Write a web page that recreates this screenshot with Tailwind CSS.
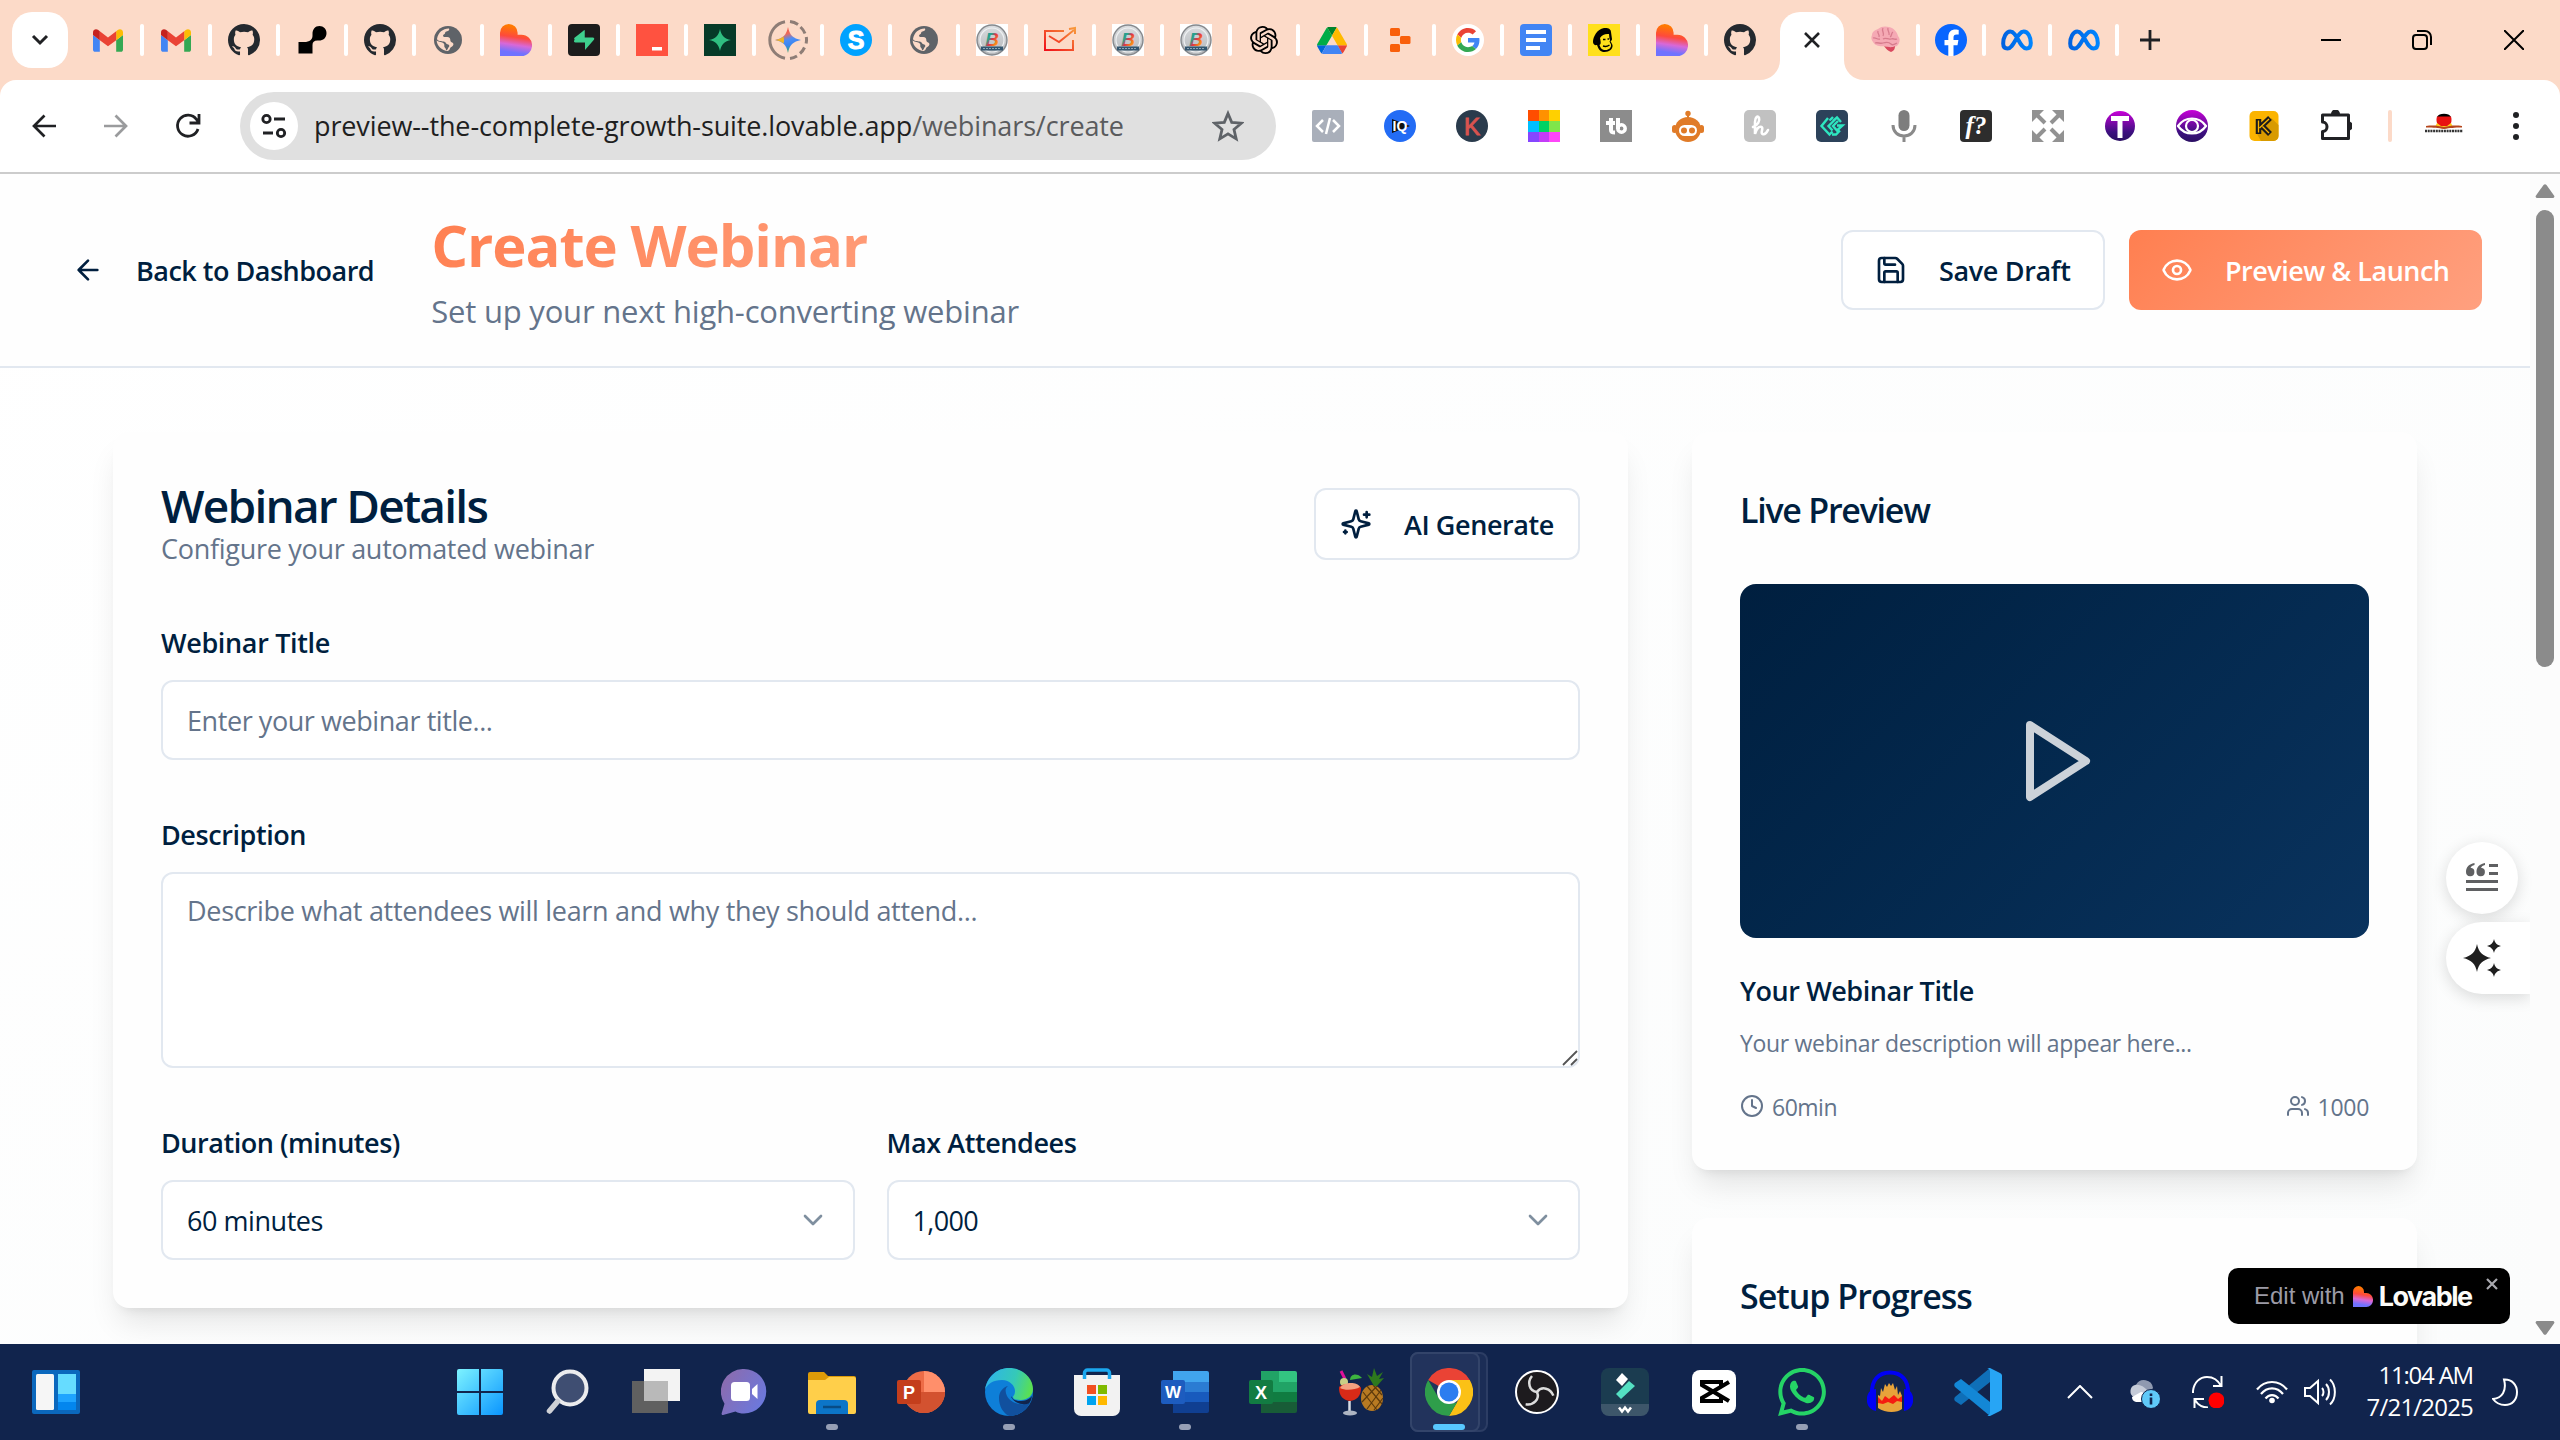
<!DOCTYPE html>
<html lang="en">
<head>
<meta charset="utf-8">
<title>Create Webinar</title>
<script src="https://cdn.jsdelivr.net/npm/@tailwindcss/browser@4"></script>
</head>
<body class="w-[2560px] h-[1440px] overflow-hidden bg-[#fcdac8] font-['Open_Sans',sans-serif] text-[#001f3f]">

<!-- shared symbols -->
<svg width="0" height="0" class="absolute">
  <defs>
    <linearGradient id="lov" x1=".6" y1="0" x2=".45" y2="1"><stop offset=".1" stop-color="#ff7a00"/><stop offset=".42" stop-color="#fe4a3c"/><stop offset=".66" stop-color="#d868d8"/><stop offset=".9" stop-color="#6f72ff"/></linearGradient>
    <linearGradient id="meta" x1="0" y1="0" x2="1" y2="0"><stop offset="0" stop-color="#0062e0"/><stop offset="1" stop-color="#0085ff"/></linearGradient>
    <linearGradient id="rb" x1="0" y1="0" x2="1" y2="1"><stop offset=".1" stop-color="#1b8f9b"/><stop offset=".35" stop-color="#2aa58a"/><stop offset=".5" stop-color="#e0304a"/><stop offset=".7" stop-color="#f6821c"/><stop offset="1" stop-color="#f8c020"/></linearGradient>
    <linearGradient id="metal" x1="0" y1="0" x2="0" y2="1"><stop offset="0" stop-color="#d9dcdf"/><stop offset="1" stop-color="#b4b7ba"/></linearGradient>
  </defs>
  <symbol id="gmail" viewBox="52 42 88 66"><path fill="#4285f4" d="M58 108h14V74L52 59v43c0 3.32 2.69 6 6 6"/><path fill="#34a853" d="M120 108h14c3.32 0 6-2.69 6-6V59l-20 15"/><path fill="#fbbc04" d="M120 48v26l20-15v-8c0-7.42-8.47-11.65-14.4-7.2"/><path fill="#ea4335" d="M72 74V48l24 18 24-18v26L96 92"/><path fill="#c5221f" d="M52 51v8l20 15V48l-5.6-4.2c-5.94-4.45-14.4-.22-14.4 7.2"/></symbol>
  <symbol id="github" viewBox="0 0 16 16"><path fill="#24292f" d="M8 0C3.58 0 0 3.58 0 8c0 3.54 2.29 6.53 5.47 7.59.4.07.55-.17.55-.38 0-.19-.01-.82-.01-1.49-2.01.37-2.53-.49-2.69-.94-.09-.23-.48-.94-.82-1.13-.28-.15-.68-.52-.01-.53.63-.01 1.08.58 1.23.82.72 1.21 1.87.87 2.33.66.07-.52.28-.87.51-1.07-1.78-.2-3.64-.89-3.64-3.95 0-.87.31-1.59.82-2.15-.08-.2-.36-1.02.08-2.12 0 0 .67-.21 2.2.82.64-.18 1.32-.27 2-.27.68 0 1.36.09 2 .27 1.53-1.04 2.2-.82 2.2-.82.44 1.1.16 1.92.08 2.12.51.56.82 1.27.82 2.15 0 3.07-1.87 3.75-3.65 3.95.29.25.54.73.54 1.48 0 1.07-.01 1.93-.01 2.2 0 .21.15.46.55.38A8.013 8.013 0 0016 8c0-4.42-3.58-8-8-8z"/></symbol>
  <symbol id="globe" viewBox="0 0 32 32"><circle cx="16" cy="16" r="14" fill="#5f6368"/><path fill="#fcdac8" d="M17 4.6c1 2-1.5 2.6-3.2 3.2-1 .4-.4 2.4-2 2.8-1.2.4-.8 2.2.2 2.4 2 .3 4-.4 5.4.8 1.600 1.400.2 3.600 2.200 4.400 1.600.6 2.400 1.800 1.400 3.200-1.200 1.600-2.400 1.200-3 3.200-.3 1.200-1 1.800-2.200 2.400-5.600 0-10.800-4.800-11.200-10.400 2.400 1.600 5.600 1.200 7.200 3 1.200 1.400-.2 3 1.200 4.200 1.200.8.6 2.400 1.600 2.400 1.600-.6 1.200-2.600 2.600-3.600.6-1.600-.6-2-1.800-2.400-1.600-.4-1.600-2.800-3.600-2.800-2.200 0-6.200-.2-6.800-2.400C6 8.600 11.200 4.400 17 4.600z"/></symbol>
  <symbol id="lovable" viewBox="0 0 32 32"><path fill="url(#lov)" d="M0 32V8.800a8.800 8.800 0 0 1 17.600 0v1.900h3.800a10.650 10.650 0 0 1 0 21.300z"/></symbol>
  <symbol id="bbadge" viewBox="0 0 32 32"><path fill="#fff" d="M0 0h32v32H0z"/><circle cx="16" cy="16" r="15" fill="url(#metal)" stroke="#85888c" stroke-width="1.400"/><circle cx="16" cy="16" r="12" fill="none" stroke="#eef0f2" stroke-width="1.200"/><path fill="#33566f" d="M5 22.500h22v4H5z"/><path stroke="#8fa5b5" d="M7 24.500h18" stroke-dasharray="2 1"/></symbol>
  <symbol id="metalogo" viewBox="0 0 32 22"><path fill="none" stroke="url(#meta)" stroke-width="4" d="M2.200 14.500C2.200 8.500 5 2.500 9.200 2.500c7 0 9.300 17 16.300 17 3 0 4.300-2.300 4.300-5.500 0-6-2.900-11.500-7-11.500C16 2.500 13 19.500 6.500 19.500c-2.900 0-4.300-2-4.300-5z"/></symbol>
</svg>

<div class="flex h-full flex-col">

<!-- tab strip -->
<div class="flex h-20 items-center pl-3">
  <div class="flex h-14 w-14 items-center justify-center rounded-[20px] bg-white">
    <svg width="20" height="20" viewBox="0 0 20 20" fill="none" stroke="#202124" stroke-width="3"><path d="M3 6l7 7 7-7"/></svg>
  </div>
  <div class="ml-2 flex items-center">
    <div class="flex w-16 justify-center"><svg width="30" height="23"><use href="#gmail"/></svg></div><i class="h-8 w-1 rounded-full bg-white"></i>
    <div class="flex w-16 justify-center"><svg width="30" height="23"><use href="#gmail"/></svg></div><i class="h-8 w-1 rounded-full bg-white"></i>
    <div class="flex w-16 justify-center"><svg width="32" height="32"><use href="#github"/></svg></div><i class="h-8 w-1 rounded-full bg-white"></i>
    <div class="flex w-16 justify-center"><svg width="32" height="32" viewBox="0 0 32 32"><path d="M2.500 29.500V18h5.500c6 0 8.500-2.500 8.500-6.500V10C16.500 5.500 19 2 23.500 2 27.500 2 30.500 5 30.500 9c0 5-3.400 7.500-7.500 7.500h-1.500c-3.500 0-5 1.500-5 4.500v8.500z"/></svg></div><i class="h-8 w-1 rounded-full bg-white"></i>
    <div class="flex w-16 justify-center"><svg width="32" height="32"><use href="#github"/></svg></div><i class="h-8 w-1 rounded-full bg-white"></i>
    <div class="flex w-16 justify-center"><svg width="32" height="32"><use href="#globe"/></svg></div><i class="h-8 w-1 rounded-full bg-white"></i>
    <div class="flex w-16 justify-center"><svg width="32" height="32"><use href="#lovable"/></svg></div><i class="h-8 w-1 rounded-full bg-white"></i>
    <div class="flex w-16 justify-center"><svg width="32" height="32" viewBox="0 0 32 32"><rect width="32" height="32" rx="4" fill="#1c1c1c"/><path fill="#3ecf8e" d="M16.500 6v10H7.500c-1.200 0-1.800-1.200-1-2.200z"/><path fill="#3ecf8e" d="M16.500 6v7.500h8.300c1.300 0 1.900 1.300 1.100 2.300L17 26V18.500H7.400c-1.200 0-1.900-1.300-1.100-2.300z"/></svg></div><i class="h-8 w-1 rounded-full bg-white"></i>
    <div class="flex w-16 justify-center"><svg width="32" height="32"><path fill="#ff5240" d="M0 0h32v32H0z"/><path fill="#fff" d="M16 23h10v3.500H16z"/></svg></div><i class="h-8 w-1 rounded-full bg-white"></i>
    <div class="flex w-16 justify-center"><svg width="32" height="32"><path fill="#063b28" d="M0 0h32v32H0z"/><path fill="#2fbf80" d="M16 5c1.200 6.500 4.500 9.800 11 11-6.500 1.200-9.800 4.500-11 11-1.200-6.500-4.500-9.800-11-11 6.500-1.200 9.800-4.500 11-11z"/></svg></div><i class="h-8 w-1 rounded-full bg-white"></i>
    <div class="flex w-16 justify-center"><svg width="40" height="40" viewBox="0 0 40 40"><defs><linearGradient id="gem" x1=".3" y1="0" x2=".6" y2="1"><stop offset="0" stop-color="#f24a3d"/><stop offset=".28" stop-color="#ee6a5a"/><stop offset=".5" stop-color="#4c8df6"/><stop offset=".7" stop-color="#3a86f0"/><stop offset="1" stop-color="#34a853"/></linearGradient></defs><path fill="none" stroke="#8e7d76" stroke-width="3" d="M17 1.800A18.500 18.500 0 0 0 17 38.200M22 1.500a18 18 0 0 1 8 3M32.500 7a18 18 0 0 1 4.500 6.500M38.300 17a18 18 0 0 1-.2 6.500M36.500 27.500a18 18 0 0 1-4.500 6M29 36a18 18 0 0 1-7 2.500"/><path fill="url(#gem)" d="M20 7c1.400 7.800 5.200 11.600 13 13-7.800 1.400-11.600 5.200-13 13-1.400-7.800-5.200-11.600-13-13 7.800-1.400 11.600-5.200 13-13z"/><path fill="#f0b429" d="M7 20c3.500-.6 6.200-1.800 8.300-3.600.8 1.500 1.200 4.500.2 7.100C13.400 21.800 10.500 20.600 7 20z"/></svg></div><i class="h-8 w-1 rounded-full bg-white"></i>
    <div class="flex w-16 justify-center"><svg width="32" height="32" viewBox="0 0 32 32"><circle cx="16" cy="16" r="16" fill="#00a2ff"/><text x="16" y="25" text-anchor="middle" font-family="Liberation Sans" font-weight="700" font-size="25" fill="#fff" stroke="#fff">S</text></svg></div><i class="h-8 w-1 rounded-full bg-white"></i>
    <div class="flex w-16 justify-center"><svg width="32" height="32"><use href="#globe"/></svg></div><i class="h-8 w-1 rounded-full bg-white"></i>
    <div class="flex w-16 justify-center"><svg width="32" height="32"><use href="#bbadge"/><text x="16" y="22" text-anchor="middle" font-family="Liberation Sans" font-weight="700" font-style="italic" font-size="19" fill="url(#rb)">B</text></svg></div><i class="h-8 w-1 rounded-full bg-white"></i>
    <div class="flex w-16 justify-center"><svg width="32" height="32" viewBox="0 0 32 32"><defs><linearGradient id="zm" x1="0" y1="1" x2="1" y2="0"><stop offset="0" stop-color="#f0101a"/><stop offset="1" stop-color="#f89a3c"/></linearGradient></defs><path fill="none" stroke="url(#zm)" stroke-width="2" d="M20 7H1v19h28V16M5 12l10 6L30 6M25 5l6-1v6"/></svg></div><i class="h-8 w-1 rounded-full bg-white"></i>
    <div class="flex w-16 justify-center"><svg width="32" height="32"><use href="#bbadge"/><text x="16" y="22" text-anchor="middle" font-family="Liberation Sans" font-weight="700" font-style="italic" font-size="19" fill="url(#rb)">B</text></svg></div><i class="h-8 w-1 rounded-full bg-white"></i>
    <div class="flex w-16 justify-center"><svg width="32" height="32"><use href="#bbadge"/><text x="16" y="22" text-anchor="middle" font-family="Liberation Sans" font-weight="700" font-style="italic" font-size="19" fill="url(#rb)">B</text></svg></div><i class="h-8 w-1 rounded-full bg-white"></i>
    <div class="flex w-16 justify-center"><svg width="28" height="28" viewBox="0 0 24 24"><path d="M22.2819 9.8211a5.9847 5.9847 0 0 0-.5157-4.9108 6.0462 6.0462 0 0 0-6.5098-2.9A6.0651 6.0651 0 0 0 4.9807 4.1818a5.9847 5.9847 0 0 0-3.9977 2.9 6.0462 6.0462 0 0 0 .7427 7.0966 5.98 5.98 0 0 0 .511 4.9107 6.051 6.051 0 0 0 6.5146 2.9001A5.9847 5.9847 0 0 0 13.2599 24a6.0557 6.0557 0 0 0 5.7718-4.2058 5.9894 5.9894 0 0 0 3.9977-2.9001 6.0557 6.0557 0 0 0-.7475-7.0729zm-9.022 12.6081a4.4755 4.4755 0 0 1-2.8764-1.0408l.1419-.0804 4.7783-2.7582a.7948.7948 0 0 0 .3927-.6813v-6.7369l2.02 1.1686a.071.071 0 0 1 .038.052v5.5826a4.504 4.504 0 0 1-4.4945 4.4944zm-9.6607-4.1254a4.4708 4.4708 0 0 1-.5346-3.0137l.142.0852 4.783 2.7582a.7712.7712 0 0 0 .7806 0l5.8428-3.3685v2.3324a.0804.0804 0 0 1-.0332.0615L9.74 19.9502a4.4992 4.4992 0 0 1-6.1408-1.6464zM2.3408 7.8956a4.485 4.485 0 0 1 2.3655-1.9728V11.6a.7664.7664 0 0 0 .3879.6765l5.8144 3.3543-2.0201 1.1685a.0757.0757 0 0 1-.071 0l-4.8303-2.7865A4.504 4.504 0 0 1 2.3408 7.872zm16.5963 3.8558L13.1038 8.364 15.1192 7.2a.0757.0757 0 0 1 .071 0l4.8303 2.7913a4.4944 4.4944 0 0 1-.6765 8.1042v-5.6772a.79.79 0 0 0-.407-.667zm2.0107-3.0231l-.142-.0852-4.7735-2.7818a.7759.7759 0 0 0-.7854 0L9.409 9.2297V6.8974a.0662.0662 0 0 1 .0284-.0615l4.8303-2.7866a4.4992 4.4992 0 0 1 6.6802 4.66zM8.3065 12.863l-2.02-1.1638a.0804.0804 0 0 1-.038-.0567V6.0742a4.4992 4.4992 0 0 1 7.3757-3.4537l-.142.0805L8.704 5.459a.7948.7948 0 0 0-.3927.6813zm1.0976-2.3654l2.602-1.4998 2.6069 1.4998v2.9994l-2.5974 1.4997-2.6067-1.4997Z"/></svg></div><i class="h-8 w-1 rounded-full bg-white"></i>
    <div class="flex w-16 justify-center"><svg width="30" height="27" viewBox="0 0 87.300 78"><path fill="#0066da" d="m6.600 66.850 3.850 6.650c.8 1.400 1.950 2.500 3.300 3.300l13.750-23.800h-27.500c0 1.550.4 3.100 1.200 4.500z"/><path fill="#00ac47" d="m43.650 25-13.750-23.800c-1.350.8-2.500 1.900-3.300 3.300l-25.400 44a9.060 9.060 0 0 0 -1.200 4.500h27.500z"/><path fill="#ea4335" d="m73.550 76.800c1.350-.8 2.500-1.900 3.300-3.300l1.600-2.750 7.650-13.250c.8-1.400 1.200-2.950 1.200-4.500h-27.502l5.852 11.500z"/><path fill="#00832d" d="m43.650 25 13.750-23.800c-1.350-.8-2.900-1.200-4.500-1.200h-18.500c-1.600 0-3.150.45-4.500 1.200z"/><path fill="#4285f4" d="m59.800 53h-32.300l-13.750 23.800c1.350.8 2.900 1.200 4.500 1.200h50.800c1.600 0 3.150-.45 4.500-1.200z"/><path fill="#ffba00" d="m73.400 26.500-12.700-22c-.8-1.400-1.950-2.500-3.300-3.300l-13.750 23.800 16.150 28h27.450c0-1.550-.4-3.100-1.200-4.500z"/></svg></div><i class="h-8 w-1 rounded-full bg-white"></i>
    <div class="flex w-16 justify-center"><svg width="32" height="32" viewBox="0 0 32 32" fill="#f95f0b"><rect x="6" y="4" width="10" height="8" rx="1.500"/><rect x="16" y="12" width="10.500" height="8" rx="1.500"/><rect x="6" y="20" width="10" height="8" rx="1.500"/></svg></div><i class="h-8 w-1 rounded-full bg-white"></i>
    <div class="flex w-16 justify-center"><div class="flex h-8 w-8 items-center justify-center rounded-full bg-white"><svg width="24" height="24" viewBox="0 0 48 48"><path fill="#EA4335" d="M24 9.500c3.540 0 6.710 1.220 9.210 3.600l6.850-6.850C35.900 2.380 30.470 0 24 0 14.620 0 6.510 5.380 2.560 13.220l7.980 6.190C12.430 13.720 17.740 9.500 24 9.500z"/><path fill="#4285F4" d="M46.980 24.550c0-1.570-.15-3.090-.38-4.550H24v9.020h12.940c-.58 2.960-2.260 5.480-4.780 7.180l7.730 6c4.510-4.180 7.090-10.360 7.090-17.650z"/><path fill="#FBBC05" d="M10.530 28.590c-.48-1.450-.76-2.990-.76-4.590s.27-3.140.76-4.590l-7.980-6.190C.92 16.460 0 20.120 0 24c0 3.880.92 7.540 2.560 10.780l7.970-6.190z"/><path fill="#34A853" d="M24 48c6.480 0 11.930-2.130 15.890-5.810l-7.730-6c-2.150 1.450-4.920 2.300-8.160 2.300-6.260 0-11.570-4.220-13.470-9.910l-7.980 6.190C6.510 42.620 14.620 48 24 48z"/></svg></div></div><i class="h-8 w-1 rounded-full bg-white"></i>
    <div class="flex w-16 justify-center"><svg width="32" height="32"><rect width="32" height="32" rx="4" fill="#4285f4"/><path fill="#fff" d="M6 6h20v4H6zM6 14h20v4H6zM6 22h14v4H6z"/></svg></div><i class="h-8 w-1 rounded-full bg-white"></i>
    <div class="flex w-16 justify-center"><svg width="32" height="32" viewBox="0 0 32 32"><path fill="#ffe01b" d="M0 0h32v32H0z"/><path d="M5 18c0-5 4-13 11-14 4-.5 7 1 7 4l1 7c0 1.500-1 2-1.500 2l2 4c.5 4-3 7-8 7-4 0-6-2.500-7.500-7C7 21.500 5 20.500 5 18z"/><path fill="#ffe01b" d="M12 14c2-3 5-4.500 9-4l.5 5c1 1 .5 2 0 2.500l1.500 3c.5 3-2 5.500-5.500 5.500-3.500 0-5-2-6-5 2-1 1-4 .5-7z"/><path fill="none" stroke="#000" stroke-width="1.500" d="M15 15.500h2.500M19.500 15h1.500M15 22c3 1 5 0 6.500-1M8 14c3-5 8-7 13-6"/></svg></div><i class="h-8 w-1 rounded-full bg-white"></i>
    <div class="flex w-16 justify-center"><svg width="32" height="32"><use href="#lovable"/></svg></div><i class="h-8 w-1 rounded-full bg-white"></i>
    <div class="flex w-16 justify-center"><svg width="32" height="32"><use href="#github"/></svg></div>
  </div>
  <!-- active tab -->
  <div class="relative ml-2 flex h-[68px] w-16 items-center justify-center self-end rounded-t-[20px] bg-white pb-3">
    <svg class="absolute bottom-0 -left-5" width="20" height="20"><path fill="#fff" d="M20 0v20H0A20 20 0 0 0 20 0z"/></svg>
    <svg class="absolute bottom-0 -right-5" width="20" height="20"><path fill="#fff" d="M0 0v20h20A20 20 0 0 1 0 0z"/></svg>
    <svg width="18" height="18" viewBox="0 0 18 18" stroke="#202124" stroke-width="2.600"><path d="M2 2l14 14M16 2L2 16"/></svg>
  </div>
  <div class="ml-2.5 flex items-center">
    <div class="flex w-[62px] justify-center"><svg width="32" height="32" viewBox="0 0 32 32"><path fill="#f5a9b4" d="M9 5c3-3 8-3 11-2 5 1 8 5 9 9 2 2 2 5 1 7-1 3-4 4-6 4-3 1-6 0-8-1-4 1-10 0-12-4-2-2-2-5-1-7C3 8 6 6 9 5z"/><path fill="#d9485f" d="M15 22c4 1 8 2 11 0 0 3-1 5-4 6-3-1-5-3-7-6z"/><path fill="none" stroke="#d77c8d" stroke-width="1.300" d="M9 7c-1 3 2 3 1 6M14 4c-2 3 2 5 0 8M19 4c-1 3 2 4 1 7M24 8c-2 1-1 4-3 5M4 14c3-1 4 2 7 1M14 15c3-2 5 1 8 0s4 1 6 0M6 19c3-1 5 1 8 0s6-1 8 1 4 0 6-1"/></svg></div><i class="h-8 w-1 rounded-full bg-white"></i>
    <div class="flex w-[62px] justify-center"><svg width="32" height="32" viewBox="0 0 32 32"><circle cx="16" cy="16" r="16" fill="#0866ff"/><path fill="#fff" d="M13.300 32V21.200H9.500V16h3.800v-2.500c0-5.400 2.500-7.900 7.500-7.900.9 0 2.200.2 2.900.4v4.600h-2c-2.300 0-3.200.9-3.200 3.200V16h4.900l-.9 5.200h-4V32z"/></svg></div><i class="h-8 w-1 rounded-full bg-white"></i>
    <div class="flex w-[62px] justify-center"><svg width="32" height="22"><use href="#metalogo"/></svg></div><i class="h-8 w-1 rounded-full bg-white"></i>
    <div class="flex w-[63px] justify-center"><svg width="32" height="22"><use href="#metalogo"/></svg></div><i class="h-8 w-1 rounded-full bg-white"></i>
  </div>
  <svg class="ml-[21px]" width="20" height="20" stroke="#202124" stroke-width="2.800"><path d="M10 0v20M0 10h20"/></svg>
  <svg class="ml-[161px]" width="20" height="20" stroke="#000" stroke-width="2"><path d="M0 10h20"/></svg>
  <svg class="ml-[71px]" width="20" height="20" fill="none" stroke="#000" stroke-width="2"><rect x="1" y="5" width="14" height="14" rx="3"/><path d="M5 1h8a6 6 0 0 1 6 6v8"/></svg>
  <svg class="ml-[72px]" width="20" height="20" stroke="#000" stroke-width="2"><path d="M0 0l20 20M20 0L0 20"/></svg>
</div>

<!-- toolbar -->
<div class="flex h-[94px] items-center rounded-t-[16px] border-b-2 border-[#cccccc] bg-white pl-8">
  <svg width="24" height="24" viewBox="0 0 24 24" fill="none" stroke="#202124" stroke-width="2.700"><path d="M24 12H2M12.500 1.500L2 12l10.500 10.500"/></svg>
  <svg class="ml-12" width="24" height="24" viewBox="0 0 24 24" fill="none" stroke="#9a9b9d" stroke-width="2.700"><path d="M0 12h22M11.500 1.500L22 12 11.500 22.500"/></svg>
  <svg class="ml-[47px]" width="26" height="26" viewBox="0 0 26 26" fill="none" stroke="#202124" stroke-width="2.800"><path d="M23 16A10.500 10.500 0 1 1 21.500 6.500L24 9.500M24 1v9h-9.500"/></svg>
  <div class="ml-[39px] flex h-[68px] w-[1036px] items-center rounded-full bg-[#e0e0e0] pr-8 pl-2.5">
    <div class="flex h-12 w-12 items-center justify-center rounded-full bg-white">
      <svg width="26" height="26" viewBox="0 0 26 26" fill="none" stroke="#202124" stroke-width="2.800"><circle cx="5.500" cy="6" r="3.700"/><path d="M13 6h11M2 20h10"/><circle cx="20" cy="20" r="3.700"/></svg>
    </div>
    <div class="ml-4 flex-1 text-[27px] leading-[68px] tracking-[-0.12px] whitespace-nowrap text-[#1f1f1f]">preview--the-complete-growth-suite.lovable.app<span class="text-[#5a5b5d]">/webinars/create</span></div>
    <svg width="32" height="32" viewBox="0 0 32 32" fill="none" stroke="#5f6368" stroke-width="2.800"><path d="M16 3.500l3.700 8.900 9.600.8-7.300 6.300 2.200 9.400-8.200-5-8.200 5L10 19.500l-7.300-6.300 9.600-.8z"/></svg>
  </div>
  <div class="ml-9 flex items-center gap-10">
    <svg width="32" height="32" fill="none" stroke="#fff" stroke-width="2.500"><rect width="32" height="32" rx="2" fill="#a9afba" stroke="none"/><path d="M11 10l-6 6 6 6M21 10l6 6-6 6M18 8l-4 16"/></svg>
    <svg width="32" height="32"><circle cx="16" cy="16" r="16" fill="#236cf5"/><path fill="#111" d="M8 9l18 7-18 7z"/><text x="16" y="21" text-anchor="middle" font-family="Liberation Sans" font-weight="700" font-size="14" fill="#fff">IQ</text></svg>
    <svg width="32" height="32"><circle cx="16" cy="16" r="16" fill="#2a3b4c"/><text x="16" y="24.500" text-anchor="middle" font-family="Liberation Sans" font-size="24" fill="#d9534f" stroke="#d9534f">K</text></svg>
    <svg width="32" height="32"><path fill="#ff4d00" d="M0 0h11v11H0z"/><path fill="#ff9100" d="M11 0h10v11H11z"/><path fill="#ffd000" d="M21 0h11v11H21z"/><path fill="#00bfff" d="M0 11h11v11H0z"/><path fill="#00d264" d="M11 11h10v11H11z"/><path fill="#7fe64a" d="M21 11h11v11H21z"/><path fill="#8646ff" d="M0 22h11v10H0z"/><path fill="#c43cf8" d="M11 22h10v10H11z"/><path fill="#ff46fa" d="M21 22h11v10H21z"/></svg>
    <svg width="32" height="32"><path fill="#8c8c8c" d="M0 0h32v32H0z"/><path fill="none" stroke="#fff" stroke-width="4" d="M11 8v12c0 2 1 2.500 4 2.500M6 13h9M18 8v11"/><circle cx="21.500" cy="18.500" r="3.700" fill="none" stroke="#fff" stroke-width="3.500"/></svg>
    <svg width="32" height="32"><g fill="#e07b28"><circle cx="16" cy="3.500" r="2.700"/><path d="M15 4h2v5h-2z"/><rect x="0" y="15" width="5" height="8" rx="2.500"/><rect x="27" y="15" width="5" height="8" rx="2.500"/><path d="M3 19a13 12 0 0 1 26 0 13 13 0 0 1-26 0z"/></g><rect x="7" y="15" width="18" height="11" rx="5.500" fill="#fff"/><circle cx="12" cy="20.500" r="3" fill="#e07b28"/><circle cx="20" cy="20.500" r="3" fill="#e07b28"/></svg>
    <svg width="32" height="32"><rect width="32" height="32" rx="5" fill="#c1c1c1"/><path fill="none" stroke="#fff" stroke-width="2.600" stroke-linecap="round" d="M9 17c5-2 7-6 6-9s-4-1-4 4v12c1-5 4-8 6.500-7S16 23 18.500 24s4-1 5.500-4"/></svg>
    <svg width="32" height="32"><rect width="32" height="32" rx="5" fill="#2c425a"/><g fill="none" stroke="#2ee6c0" stroke-width="2.400"><path d="M17 7L13.500 10.500M12 8L5.500 16l8 8.500 3-3M20 8.500L12.500 16l4 4.500M17 11l4-3.500L25 12M22 11l-5 5 4 4.500 5.500-5H21M16 24.500h4l4-4"/></g></svg>
    <svg width="32" height="32"><rect x="10.500" y="0" width="11" height="21" rx="5.500" fill="#7d7d7d"/><path fill="none" stroke="#8a8a8a" stroke-width="3" d="M5 15c0 7 5 11 11 11s11-4 11-11M16 26v6"/></svg>
    <svg width="32" height="32"><rect width="32" height="32" rx="4" fill="#2d2d2d"/><text x="16" y="24" text-anchor="middle" font-family="Liberation Serif" font-weight="700" font-style="italic" font-size="25" fill="#fff">f?</text></svg>
    <svg width="32" height="32" fill="#929292" stroke="#929292" stroke-width="4"><path stroke="none" d="M0 0h12L0 12zM32 0v12L20 0zM0 32V20l12 12zM32 32H20l12-12z"/><path d="M3 3l10 10M29 3L19 13M3 29l10-10M29 29L19 19"/></svg>
    <svg width="32" height="32"><defs><linearGradient id="pu" x1="0" y1="0" x2="0" y2="1"><stop offset="0" stop-color="#c800d8"/><stop offset=".7" stop-color="#3d1080"/><stop offset="1" stop-color="#2a0f62"/></linearGradient></defs><circle cx="16" cy="16" r="15" fill="url(#pu)"/><path fill="#fff" d="M7 6h18v5H18.500v17h-5V11H7z"/></svg>
    <svg width="32" height="32"><circle cx="16" cy="16" r="16" fill="url(#pu)"/><path fill="none" stroke="#fff" stroke-width="2.200" d="M2 16c7-10 21-10 28 0-7 10-21 10-28 0z"/><circle cx="16" cy="16" r="6" fill="none" stroke="#fff" stroke-width="2.200"/></svg>
    <svg width="32" height="32"><rect x="1.500" y="1" width="29" height="30" rx="5" fill="#fbb400"/><path fill="#d89a00" d="M9 24l4 7h12.500a5 5 0 0 0 5-5V15l-7-7z"/><path fill="none" stroke="#1b1b1b" stroke-width="5.500" d="M10.500 9v15M11 18.500L22 8M14 16l8 8"/><path fill="none" stroke="#fbb400" stroke-width="1.300" d="M10.500 10.500v12M11.500 18L21 9M14.500 16.500l6.500 6.500"/></svg>
    <svg width="32" height="32" viewBox="0 0 32 32" fill="none" stroke="#202124" stroke-width="3"><path d="M3 4h26v23.500H3v-7c3 0 4.500-2.500 4.500-4.700S6 11 3 11z" transform="translate(-.5 1)" stroke-linejoin="round"/><path fill="#202124" stroke="none" d="M11 4a4.500 4.500 0 0 1 9 0zM28.500 11.500a4.500 4.500 0 0 1 0 9z"/></svg>
  </div>
  <i class="ml-9 h-8 w-1 rounded-full bg-[#fcdac8]"></i>
  <svg class="ml-8" width="40" height="32" viewBox="0 0 40 32"><path d="M13 7a7.500 5 0 0 1 14 0z"/><path fill="#e81212" d="M13 6.500c-2 7 2 11 7 11s9-4 7-11z"/><path fill="#ffc91a" d="M13 13l4 3h6l4-3 2 4H11z"/><path fill="#b5461c" d="M2 16c8-1 12 0 18 1 6-1 10-2 18-1v1.500c-8 0-12 .5-18 1.500-6-1-10-1.500-18-1.500z"/><path stroke="#333" stroke-width="2.600" stroke-dasharray="2 .7" d="M1 21h38"/></svg>
  <svg class="ml-[49px]" width="6" height="30" fill="#202124"><circle cx="3" cy="4" r="3"/><circle cx="3" cy="15" r="3"/><circle cx="3" cy="26" r="3"/></svg>
</div>

<!-- page viewport -->
<div class="relative flex h-[1170px] overflow-hidden bg-white">
  <div class="flex w-[2530px] flex-col bg-linear-to-br from-white to-[#fbfcfc]">
    <header class="flex h-[194px] shrink-0 items-center border-b-2 border-[#e2e8f0] bg-[#fefefe] px-12">
      <div class="flex items-center pl-6 text-[27px] font-semibold tracking-[-0.5px]">
        <svg class="mr-8" width="32" height="32" viewBox="0 0 24 24" fill="none" stroke="currentColor" stroke-width="2" stroke-linecap="round" stroke-linejoin="round"><path d="m12 19-7-7 7-7M19 12H5"/></svg>
        <span class="pt-0.5">Back to Dashboard</span>
      </div>
      <div class="ml-[57px] flex flex-col gap-1.5 pt-1">
        <h1 class="w-max bg-linear-135 from-[#ff7f50] to-[#ff9c78] bg-clip-text text-[58px] leading-[72px] font-bold tracking-[-1.1px] text-transparent">Create Webinar</h1>
        <p class="text-[31px] leading-[48px] tracking-[-0.2px] text-[#64748b]">Set up your next high-converting webinar</p>
      </div>
      <div class="ml-auto flex gap-6 text-[27px] font-semibold">
        <div class="flex h-20 w-[264px] items-center gap-8 rounded-[12px] border-2 border-[#e2e8f0] bg-white pl-8 tracking-[-0.36px]">
          <svg width="32" height="32" viewBox="0 0 24 24" fill="none" stroke="currentColor" stroke-width="2" stroke-linecap="round" stroke-linejoin="round"><path d="M15.200 3a2 2 0 0 1 1.400.6l3.800 3.800a2 2 0 0 1 .6 1.400V19a2 2 0 0 1-2 2H5a2 2 0 0 1-2-2V5a2 2 0 0 1 2-2z"/><path d="M17 21v-7a1 1 0 0 0-1-1H8a1 1 0 0 0-1 1v7M7 3v4a1 1 0 0 0 1 1h7"/></svg>
          <span class="pt-0.5">Save Draft</span>
        </div>
        <div class="flex h-20 w-[353px] items-center gap-8 rounded-[12px] bg-linear-135 from-[#ff7f50] to-[#ffa07f] pl-8 tracking-[-0.5px] whitespace-nowrap text-white">
          <svg width="32" height="32" viewBox="0 0 24 24" fill="none" stroke="currentColor" stroke-width="2" stroke-linecap="round" stroke-linejoin="round"><path d="M2.062 12.348a1 1 0 0 1 0-.696 10.750 10.750 0 0 1 19.876 0 1 1 0 0 1 0 .696 10.750 10.750 0 0 1-19.876 0"/><circle cx="12" cy="12" r="3"/></svg>
          <span class="pt-0.5">Preview &amp; Launch</span>
        </div>
      </div>
    </header>

    <main class="flex items-start gap-16 px-[113px] pt-16">
      <section class="flex w-[1515px] shrink-0 flex-col gap-[61px] rounded-[16px] bg-[#fefefe] p-12 shadow-[0_20px_30px_-6px_rgb(0_0_0/0.1),0_8px_12px_-8px_rgb(0_0_0/0.1)]">
        <div class="flex h-[88px] items-center justify-between">
          <div>
            <h2 class="text-[46px] leading-[50px] font-semibold tracking-[-1.75px]">Webinar Details</h2>
            <p class="text-[27px] leading-[38px] tracking-[-0.29px] text-[#64748b]">Configure your automated webinar</p>
          </div>
          <div class="flex h-[72px] w-[266px] items-center gap-8 rounded-[12px] border-2 border-[#e2e8f0] bg-white pl-6 text-[27px] font-semibold tracking-[-0.41px] whitespace-nowrap">
            <svg width="32" height="32" viewBox="0 0 24 24" fill="none" stroke="currentColor" stroke-width="2" stroke-linecap="round" stroke-linejoin="round"><path d="M9.937 15.500A2 2 0 0 0 8.500 14.063l-6.135-1.582a.5.5 0 0 1 0-.962L8.500 9.936A2 2 0 0 0 9.937 8.500l1.582-6.135a.5.5 0 0 1 .963 0L14.063 8.500A2 2 0 0 0 15.500 9.937l6.135 1.581a.5.5 0 0 1 0 .964L15.500 14.063a2 2 0 0 0-1.437 1.437l-1.582 6.135a.5.5 0 0 1-.963 0zM20 3v4M22 5h-4M4 17v2M5 18H3"/></svg>
            <span class="pt-0.5">AI Generate</span>
          </div>
        </div>
        <div class="flex flex-col gap-[23px]">
          <div class="text-[27px] leading-7 font-semibold tracking-[-0.34px]">Webinar Title</div>
          <div class="h-20 rounded-[12px] border-2 border-[#e2e8f0] bg-white pl-6 text-[27px] leading-[78px] tracking-[-0.43px] text-[#64748b]">Enter your webinar title...</div>
        </div>
        <div class="flex flex-col gap-[23px]">
          <div class="text-[27px] leading-7 font-semibold tracking-[-0.43px]">Description</div>
          <div class="relative h-[196px] rounded-[12px] border-2 border-[#e2e8f0] bg-white pt-[17px] pl-6 text-[27px] leading-[40px] tracking-[-0.31px] text-[#64748b]">Describe what attendees will learn and why they should attend...
            <svg class="absolute right-0 bottom-0" width="16" height="16" stroke="#555" stroke-width="1.800"><path d="M1 15L15 1M9 15l6-6"/></svg>
          </div>
        </div>
        <div class="grid grid-cols-2 gap-8">
          <div class="flex flex-col gap-[23px]">
            <div class="text-[27px] leading-7 font-semibold tracking-[-0.46px]">Duration (minutes)</div>
            <div class="flex h-20 items-center justify-between rounded-[12px] border-2 border-[#e2e8f0] bg-white pr-6 pl-6 text-[27px] tracking-[-0.45px]"><span class="pt-0.5">60 minutes</span>
              <svg width="32" height="32" viewBox="0 0 24 24" fill="none" stroke="#7f8f9f" stroke-width="2" stroke-linecap="round" stroke-linejoin="round"><path d="m6 9 6 6 6-6"/></svg>
            </div>
          </div>
          <div class="flex flex-col gap-[23px]">
            <div class="text-[27px] leading-7 font-semibold tracking-[-0.42px]">Max Attendees</div>
            <div class="flex h-20 items-center justify-between rounded-[12px] border-2 border-[#e2e8f0] bg-white pr-6 pl-6 text-[27px] tracking-[-0.65px]"><span class="pt-0.5">1,000</span>
              <svg width="32" height="32" viewBox="0 0 24 24" fill="none" stroke="#7f8f9f" stroke-width="2" stroke-linecap="round" stroke-linejoin="round"><path d="m6 9 6 6 6-6"/></svg>
            </div>
          </div>
        </div>
      </section>

      <aside class="flex w-[725px] shrink-0 flex-col gap-12">
        <section class="flex flex-col rounded-[16px] bg-[#fefefe] p-12 shadow-[0_20px_30px_-6px_rgb(0_0_0/0.1),0_8px_12px_-8px_rgb(0_0_0/0.1)]">
          <h3 class="mb-11 text-[34px] leading-[60px] font-semibold tracking-[-1.25px]">Live Preview</h3>
          <div class="flex h-[354px] items-center justify-center rounded-[16px] bg-linear-135 from-[#001f3f] to-[#0a335e]">
            <svg class="mr-0.5" width="96" height="96" viewBox="0 0 24 24" fill="none" stroke="#ccd2d9" stroke-width="2" stroke-linecap="round" stroke-linejoin="round"><path d="M6 3l14 9-14 9z"/></svg>
          </div>
          <div class="mt-[33px] text-[27px] leading-[40px] font-semibold tracking-[-0.43px]">Your Webinar Title</div>
          <div class="mt-4 text-[23px] leading-8 tracking-[-0.32px] text-[#64748b]">Your webinar description will appear here...</div>
          <div class="mt-[31px] flex h-8 items-center justify-between text-[23px] text-[#64748b]">
            <div class="flex items-center gap-2 tracking-[-0.5px]"><svg width="24" height="24" viewBox="0 0 24 24" fill="none" stroke="currentColor" stroke-width="2" stroke-linecap="round" stroke-linejoin="round"><circle cx="12" cy="12" r="10"/><path d="M12 6v6l4 2"/></svg><span class="pt-0.5">60min</span></div>
            <div class="flex items-center gap-2 tracking-[-0.3px]"><svg width="24" height="24" viewBox="0 0 24 24" fill="none" stroke="currentColor" stroke-width="2" stroke-linecap="round" stroke-linejoin="round"><path d="M16 21v-2a4 4 0 0 0-4-4H6a4 4 0 0 0-4 4v2M22 21v-2a4 4 0 0 0-3-3.870M16 3.130a4 4 0 0 1 0 7.750"/><circle cx="9" cy="7" r="4"/></svg><span class="pt-0.5">1000</span></div>
          </div>
        </section>
        <section class="h-[400px] rounded-[16px] bg-[#fefefe] p-12 shadow-[0_20px_30px_-6px_rgb(0_0_0/0.1),0_8px_12px_-8px_rgb(0_0_0/0.1)]">
          <h3 class="text-[34px] leading-[60px] font-semibold tracking-[-1px]">Setup Progress</h3>
        </section>
      </aside>
    </main>
  </div>

  <!-- scrollbar -->
  <div class="flex flex-1 flex-col items-center bg-[#fcfcfc] pt-2.5 pb-[9px]">
    <svg width="20" height="14" fill="#8b8b8b"><path d="M2 14a1.500 1.500 0 0 1-1-2.500L8.500 1a2 2 0 0 1 3 0L19 11.500a1.500 1.500 0 0 1-1 2.500z"/></svg>
    <div class="mt-3 h-[457px] w-[18px] rounded-full bg-[#8b8b8b]"></div>
    <svg class="mt-auto" width="20" height="14" fill="#8b8b8b"><path d="M2 0a1.500 1.500 0 0 0-1 2.500L8.500 13a2 2 0 0 0 3 0L19 2.500A1.500 1.500 0 0 0 18 0z"/></svg>
  </div>

  <!-- floating assistant buttons -->
  <div class="absolute top-[668px] left-[2446px] flex h-[72px] w-[72px] items-center justify-center rounded-full bg-white shadow-[0_4px_16px_rgb(0_0_0/0.14)]">
    <svg width="32" height="32" viewBox="0 0 32 32" fill="#5f6062"><path d="M0 18h32v3H0zM0 26h32v3H0zM23 2h9v3h-9zM23 10h9v3h-9zM8.500 1C3 2 0 5 0 10a4.200 4.200 0 1 0 4.500-4.200C5 4.500 6.500 3.500 8.500 3zM19 1c-5.500 1-8.500 4-8.500 9A4.200 4.200 0 1 0 15 5.800C15.500 4.500 17 3.500 19 3z"/></svg>
  </div>
  <div class="absolute top-[748px] left-[2446px] flex h-[72px] w-[84px] items-center rounded-l-full bg-white pl-[17px] shadow-[0_4px_16px_rgb(0_0_0/0.14)] [clip-path:inset(-30px_0_-30px_-30px)]">
    <svg width="38" height="38" viewBox="0 0 38 38" fill="#1f1f1f"><path d="M14 5c1.500 8 5.500 12 14 14-8.500 2-12.500 6-14 14-1.500-8-5.500-12-14-14C8.500 17 12.500 13 14 5zM31 0c1 4 3 6 7 7-4 1-6 3-7 7-1-4-3-6-7-7 4-1 6-3 7-7zM31 24c1 4 3 6 7 7-4 1-6 3-7 7-1-4-3-6-7-7 4-1 6-3 7-7z"/></svg>
  </div>

  <!-- Lovable badge -->
  <div class="absolute top-[1094px] left-[2228px] flex h-14 w-[282px] items-center rounded-[10px] bg-black pl-[26px] font-['Liberation_Sans',sans-serif]">
    <span class="text-[24px] text-[#9c9ba6]">Edit with</span>
    <svg class="ml-2" width="20" height="21" viewBox="0 0 32 32" preserveAspectRatio="none"><use href="#lovable" width="32" height="32"/></svg>
    <span class="ml-1.5 pt-0.5 font-['Inter',sans-serif] text-[27px] font-bold tracking-[-1.5px] text-[#fcfbf8]">Lovable</span>
    <svg class="absolute top-2.5 right-3" width="12" height="12" stroke="#a8a8ae" stroke-width="2.200"><path d="M1 1l10 10M11 1L1 11"/></svg>
  </div>
</div>

<!-- taskbar -->
<div class="flex h-24 items-center bg-[#11244d]">
  <svg class="ml-8" width="48" height="44" viewBox="0 0 48 44"><rect width="48" height="44" rx="2" fill="#0b68bd"/><rect x="4" y="4" width="18" height="36" rx="1.500" fill="#f6f6f6"/><path fill="#66dcff" d="M26 4h18v20H26z"/><path fill="#1ea4ff" d="M26 24h18v8H26z"/><path fill="#0386ee" d="M26 32h18v8H26z"/></svg>
  <div class="ml-[356px] grid h-24 w-[1586px] grid-cols-18 items-center">
    <div class="relative flex justify-center"><svg width="46" height="46"><defs><linearGradient id="win" gradientUnits="userSpaceOnUse" x1="0" y1="0" x2="46" y2="46"><stop offset="0" stop-color="#7df3ff"/><stop offset="1" stop-color="#0a95ff"/></linearGradient></defs><path fill="url(#win)" d="M2 0h20v22H0V2a2 2 0 0 1 2-2zM24 0h20a2 2 0 0 1 2 2v20H24zM0 24h22v22H2a2 2 0 0 1-2-2zM24 24h22v20a2 2 0 0 1-2 2H24z"/></svg></div>
    <div class="relative flex justify-center"><svg width="46" height="46" viewBox="0 0 46 46"><circle cx="25" cy="19" r="16.500" fill="#3f4e72" stroke="#ececee" stroke-width="4"/><path stroke="#cfd1d6" stroke-width="5.500" stroke-linecap="round" d="M12.500 32.500L4.500 42"/></svg></div>
    <div class="relative flex justify-center"><svg width="48" height="46" viewBox="0 0 48 46"><path fill="#606060" d="M0 12h36v32H0z"/><path fill="#f3f3f3" d="M12 0h36v32H12z"/><path fill="#b9b9b9" d="M12 12h24v20H12z"/></svg></div>
    <div class="relative flex justify-center"><svg width="46" height="46" viewBox="0 0 46 46"><defs><linearGradient id="tm" x1="0" y1="0" x2="1" y2=".6"><stop offset="0" stop-color="#8f6aa8"/><stop offset="1" stop-color="#6c78dc"/></linearGradient></defs><path fill="url(#tm)" d="M23 0a22 22 0 0 1 0 44.500c-3.500 0-6-.5-8.500-2L2 46c-1.200 0-1.700-1-1.200-2.200l2.700-9A22.500 22.500 0 0 1 23 0z"/><rect x="10" y="13" width="19" height="19" rx="3.500" fill="#fff"/><path fill="#fff" d="M31 20l5.500-5v15L31 25z"/></svg></div>
    <div class="relative flex justify-center"><svg width="48" height="44" viewBox="0 0 48 44"><path fill="#dd9b08" d="M2 2h14l4 4h26a2 2 0 0 1 2 2v6H0V4a2 2 0 0 1 2-2z"/><path fill="#ffcf4a" d="M0 10h17l4-3h25a2 2 0 0 1 2 2v33a2 2 0 0 1-2 2H2a2 2 0 0 1-2-2z"/><path fill="#0c75c8" d="M8 44V34a4 4 0 0 1 4-4h24a4 4 0 0 1 4 4v10z"/><path stroke="#084c86" stroke-width="2.500" d="M15 37h18"/></svg><i class="absolute -bottom-4 left-[38px] h-1.5 w-3 rounded-full bg-[#969fb5]"></i></div>
    <div class="relative flex justify-center"><svg width="48" height="44" viewBox="0 0 48 44"><circle cx="27" cy="22" r="21" fill="#ed6c47"/><path fill="#ff8f6b" d="M27 1a21 21 0 0 1 21 21H27z"/><path fill="#d35230" d="M6 22h42a21 21 0 0 1-42 0z"/><rect y="10" width="24" height="24" rx="2" fill="#c43e1c"/><text x="12" y="28.500" text-anchor="middle" font-family="Liberation Sans" font-weight="700" font-size="18" fill="#fff">P</text></svg></div>
    <div class="relative flex justify-center"><svg width="48" height="48" viewBox="0 0 48 48"><defs><linearGradient id="ed" x1="0" y1=".3" x2="1" y2=".5"><stop offset="0" stop-color="#2fb4ea"/><stop offset=".6" stop-color="#35c9b8"/><stop offset="1" stop-color="#5be04f"/></linearGradient></defs><circle cx="24" cy="24" r="24" fill="#0e7fd8"/><path fill="url(#ed)" d="M0 22C2 9 12 0 24 0c14 0 24 10 24 21 0 7-6 11-12 11-5 0-8-1-8-3 0-1 2-2 2-6 0-5-5-11-13-11C8 12 2 16 0 22z"/><path fill="#11509e" d="M14 30c0-6 4-11 9-12-3 2-3 6-1 10 3 6 11 9 17 8 3 0 5-1 6-1-4 8-12 13-21 13-6-3-10-10-10-18z"/><path fill="#11244d" d="M27 29c0 2.500 4 4 9 4 6 0 9-3 11-5-.5 3-1 5-3 7.500-6 2-15 0-18-7z"/></svg><i class="absolute -bottom-3.5 left-[38px] h-1.5 w-3 rounded-full bg-[#969fb5]"></i></div>
    <div class="relative flex justify-center"><svg width="46" height="48" viewBox="0 0 46 48"><path fill="#f2f2f2" d="M0 7h46v34a7 7 0 0 1-7 7H7a7 7 0 0 1-7-7z"/><path fill="none" stroke="#1ba8f0" stroke-width="3.500" d="M10.500 11V5a3 3 0 0 1 3-3h19a3 3 0 0 1 3 3v6"/><path fill="#f25022" d="M13 17h9v9h-9z"/><path fill="#7fba00" d="M24 17h9v9h-9z"/><path fill="#00a4ef" d="M13 28h9v9h-9z"/><path fill="#ffb900" d="M24 28h9v9h-9z"/></svg></div>
    <div class="relative flex justify-center"><svg width="48" height="44" viewBox="0 0 48 44"><path fill="#41a5ee" d="M12 1h34a2 2 0 0 1 2 2v9H12z"/><path fill="#2b7cd3" d="M12 12h36v10H12z"/><path fill="#185abd" d="M12 22h36v10H12z"/><path fill="#103f91" d="M12 32h36v9a2 2 0 0 1-2 2H12z"/><rect y="10" width="24" height="24" rx="2" fill="#1d5cbf"/><text x="12" y="28" text-anchor="middle" font-family="Liberation Sans" font-weight="700" font-size="17" fill="#fff">W</text></svg><i class="absolute -bottom-4 left-[38px] h-1.5 w-3 rounded-full bg-[#969fb5]"></i></div>
    <div class="relative flex justify-center"><svg width="48" height="44" viewBox="0 0 48 44"><path fill="#21a366" d="M12 1h18v21H12z"/><path fill="#33c481" d="M30 1h16a2 2 0 0 1 2 2v9H30z"/><path fill="#21a366" d="M30 12h18v10H30z"/><path fill="#107c41" d="M12 22h36v10H12z"/><path fill="#185c37" d="M12 32h36v9a2 2 0 0 1-2 2H12z"/><rect y="10" width="24" height="24" rx="2" fill="#127c42"/><text x="12" y="28.500" text-anchor="middle" font-family="Liberation Sans" font-weight="700" font-size="18" fill="#fff">X</text></svg></div>
    <div class="relative flex justify-center"><svg width="48" height="48" viewBox="0 0 48 48"><ellipse cx="35" cy="30" rx="11" ry="13" fill="#b87a22"/><path stroke="#5d3a0c" stroke-width="1.200" d="M26 24l14 18M30 18l15 18M36 17l9 10M44 22L30 41M46 30l-9 12M40 18L25 34"/><path fill="#2e7a1e" d="M37 18L30 6l5 3 2-9 3 8 6-4-4 7 5-1-7 8z"/><path stroke="#e0109a" stroke-width="3" d="M4 3l4 8"/><path stroke="#4250d0" stroke-width="2" d="M8 10l4 12"/><path fill="#3db540" d="M13 12c0-6 7-8 12-2z"/><circle cx="7" cy="14" r="4" fill="#c9cf85"/><path fill="#d92a17" d="M2 20c0 8 4 12 11 13 7-1 11-5 11-13 0-4-22-6-22 0z"/><path fill="#f3a080" d="M3 20c3-6 17-7 20-1-5 3-15 4-20 1z"/><path stroke="#d5dbe5" stroke-width="2.500" d="M12.500 33v12"/><ellipse cx="13" cy="45" rx="7" ry="2.500" fill="#aeb5c2"/></svg></div>
    <div class="relative flex justify-center">
      <i class="absolute -top-4 left-[5px] h-20 w-[78px] rounded-[8px] border-2 border-[#2c3d64] bg-[#1b2d56]"></i>
      <i class="absolute -top-4 left-[5px] h-20 w-[70px] rounded-[8px] border-2 border-[#33446a] bg-[#22335c]"></i>
      <svg class="relative" width="48" height="48" viewBox="0 0 48 48"><path fill="#ea4335" d="M24 24L3.200 12A24 24 0 0 1 44.800 12z"/><path fill="#fbc116" d="M24 12h20.800A24 24 0 0 1 24 48l10.400-18z"/><path fill="#2f9e4b" d="M3.200 12l10.400 18L24 36l8-1.500L24 48A24 24 0 0 1 3.200 12z"/><circle cx="24" cy="24" r="12" fill="#fff"/><circle cx="24" cy="24" r="9.500" fill="#2c7df0"/></svg>
      <i class="absolute -bottom-3.5 left-7 h-1.5 w-8 rounded-full bg-[#58c8ff]"></i>
    </div>
    <div class="relative flex justify-center"><svg width="46" height="46" viewBox="0 0 46 46"><circle cx="23" cy="23" r="21" fill="#1d1b1e" stroke="#fff" stroke-width="2"/><g fill="none" stroke="#dcdcdc" stroke-width="2.500"><path d="M23 23c-8-1-10-10-5-16"/><path d="M23 23c-8-1-10-10-5-16" transform="rotate(120 23 23)"/><path d="M23 23c-8-1-10-10-5-16" transform="rotate(240 23 23)"/></g></svg></div>
    <div class="relative flex justify-center"><svg width="48" height="48" viewBox="0 0 48 48"><path fill="#1b3c50" d="M8 0h32a8 8 0 0 1 8 8v28H0V8a8 8 0 0 1 8-8z"/><path fill="#3d566a" d="M0 36h48v4a8 8 0 0 1-8 8H8a8 8 0 0 1-8-8z"/><path fill="#fff" d="M21 5l6 6-6 7-6-6z"/><path fill="#54e0c2" d="M28 13l6 5-14 13-5-5z"/><path fill="none" stroke="#fff" stroke-width="2.500" d="M18 39.500l3 4 3-4 3 4 3-4"/></svg></div>
    <div class="relative flex justify-center"><svg width="44" height="44" viewBox="0 0 44 44"><rect width="44" height="44" rx="8" fill="#fff"/><path fill="none" stroke="#000" stroke-width="4" d="M37 12L10 28v3h19v-5M37 31L10 15v-3h19v5"/></svg></div>
    <div class="relative flex justify-center"><svg width="48" height="48" viewBox="0 0 24 24"><path fill="#25d366" d="M.057 24l1.687-6.163c-1.041-1.804-1.588-3.849-1.587-5.946.003-6.556 5.338-11.891 11.893-11.891 3.181.001 6.167 1.240 8.413 3.488 2.245 2.248 3.481 5.236 3.480 8.414-.003 6.557-5.338 11.892-11.893 11.892-1.990-.001-3.951-.5-5.688-1.448l-6.305 1.654zm6.597-3.807c1.676.995 3.276 1.591 5.392 1.592 5.448 0 9.886-4.434 9.889-9.885.002-5.462-4.415-9.890-9.881-9.892-5.452 0-9.887 4.434-9.889 9.884-.001 2.225.651 3.891 1.746 5.634l-.999 3.648 3.742-.981zm11.387-5.464c-.074-.124-.272-.198-.57-.347-.297-.149-1.758-.868-2.031-.967-.272-.099-.47-.149-.669.149-.198.297-.768.967-.941 1.165-.173.198-.347.223-.644.074-.297-.149-1.255-.462-2.390-1.475-.883-.788-1.480-1.761-1.653-2.059-.173-.297-.018-.458.130-.606.134-.133.297-.347.446-.521.151-.172.200-.296.300-.495.099-.198.050-.372-.025-.521-.075-.148-.669-1.611-.916-2.206-.242-.579-.487-.501-.669-.510l-.57-.010c-.198 0-.52.074-.792.372s-1.040 1.016-1.040 2.479 1.065 2.876 1.213 3.074c.149.198 2.095 3.200 5.076 4.487.709.306 1.263.489 1.694.626.712.226 1.360.194 1.872.118.571-.085 1.758-.719 2.006-1.413.248-.695.248-1.290.173-1.414z"/></svg><i class="absolute -bottom-3.5 left-[38px] h-1.5 w-3 rounded-full bg-[#969fb5]"></i></div>
    <div class="relative flex justify-center"><svg width="48" height="44" viewBox="0 0 48 44"><path fill="none" stroke="#0000f5" stroke-width="4" d="M6 24C5 10 13 2.500 24 2.500S43 10 42 24"/><path fill="#0000f5" d="M1 27c1-5 4-8 9-8v22c-5-1-8-4-9-9zM47 27c-1-5-4-8-9-8v22c5-1 8-4 9-9z"/><path fill="#e8a33a" d="M12 38V25l2 1 1-8 2 4 2-8 2 3 2-4 2 3 2-3 2 7 2-4 1 9 2-4 2 5v13c-5 4-17 4-24-1z"/><path fill="#f51b10" d="M12 27l4 4 3-5 4 3 5-4 4 4 4-3v6l-5-1-4 3-5-2-5 2-5-1z"/></svg></div>
    <div class="relative flex justify-center"><svg width="48" height="48" viewBox="0 0 48 48"><path fill="#0f6fb8" d="M36 0v14L7 37l-6-4c-1-1-1-3 0-4z"/><path fill="#1387d6" d="M36 48V34L7 11l-6 4c-1 1-1 3 0 4z"/><path fill="#27a5f5" d="M36 0l10 5a3 3 0 0 1 2 3v32a3 3 0 0 1-2 3l-10 5c-1 0-2 0-3-1 2 1 3-1 3-3V4c0-2-1-4-3-3 1-1 2-1 3-1z"/></svg></div>
  </div>
  <!-- tray -->
  <svg class="ml-[45px]" width="26" height="14" fill="none" stroke="#fff" stroke-width="2"><path d="M1 13L13 1l12 12"/></svg>
  <svg class="ml-[35px]" width="32" height="32" viewBox="0 0 32 32"><path fill="#8f99b0" d="M8 9a9 9 0 0 1 17 3l-6 8z"/><path fill="#c5cbd8" d="M6 21a6.500 6.500 0 0 1 1-12c5-1 9 2 12 5l-8 9z"/><path fill="#fff" d="M4 21l9-5 8 2-6 8H8a5 5 0 0 1-4-5z"/><circle cx="23" cy="23" r="9.500" fill="#5fc9f8" stroke="#11244d"/><path stroke="#11244d" stroke-width="2.600" d="M23 21.500v7M23 17.500v2.500"/></svg>
  <svg class="ml-8" width="32" height="32" viewBox="0 0 32 32" fill="none" stroke="#fff" stroke-width="2"><path d="M1 17v-2C2 6 8 1 15 1c6 0 11 3 14 9M29.500 0v10H21M2.500 32V23h9.500M3 24c3 5 7 7.500 13 7.500"/><circle cx="24.500" cy="24.500" r="8" fill="#f00" stroke="none"/></svg>
  <svg class="ml-8" width="32" height="24" viewBox="0 0 32 24" fill="none" stroke="#fff" stroke-width="2.200"><path d="M1 9.500c8-10 22-10 30 0M5 14c6-7.500 16-7.500 22 0M9.500 18.500c3.500-4.500 9.500-4.500 13 0"/><circle cx="16" cy="20.500" r="2.800" fill="#fff" stroke="none"/></svg>
  <svg class="ml-4" width="32" height="28" viewBox="0 0 32 28" fill="none" stroke="#fff" stroke-width="2"><path d="M1 10v8h5l8 7V3L6 10zM18 10c2 2 2 6 0 8M22 6c4 4 4 12 0 16M26 1.500c6.500 6 6.500 19 0 25"/></svg>
  <div class="w-[137px] pb-0.5 text-right text-[24px] leading-8 text-white"><div class="tracking-[-1.200px]">11:04 AM</div><div class="tracking-[-0.800px]">7/21/2025</div></div>
  <svg class="ml-[19px]" width="26" height="28" viewBox="0 0 26 28" fill="none" stroke="#fff" stroke-width="2"><path d="M12 1.500C20 1 25 7 25 14c0 8-5 13-12 13-5 0-9-2-12-6 9-1 14-8 11-19.500z"/></svg>
</div>
</div>
</body>
</html>
